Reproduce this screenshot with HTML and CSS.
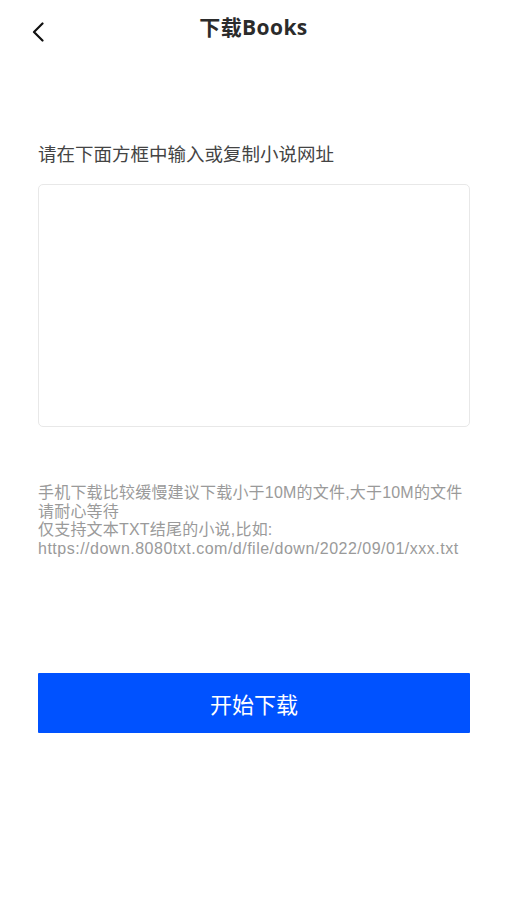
FILE: index.html
```html
<!DOCTYPE html>
<html lang="zh-CN">
<head>
<meta charset="utf-8">
<title>下载Books</title>
<link rel="stylesheet" href="styles.css">
</head>
<body>
<header class="nav">
  <div class="nav-left">
    <svg class="back" width="12" height="20" viewBox="0 0 12 20" aria-hidden="true">
      <path d="M10.5 1.5 L2 10 L10.5 18.5" fill="none" stroke="#111" stroke-width="2.2" stroke-linecap="round" stroke-linejoin="round"/>
    </svg>
  </div>
  <h1 class="title">下载Books</h1>
  <div class="nav-right"></div>
</header>
<main class="content">
  <p class="label">请在下面方框中输入或复制小说网址</p>
  <textarea class="url-box"></textarea>
  <div class="hint">
    <p class="hint-line">手机下载比较缓慢建议下载小于10M的文件,大于10M的文件</p>
    <p class="hint-line">请耐心等待</p>
    <p class="hint-line">仅支持文本TXT结尾的小说,比如:</p>
    <p class="hint-line hint-url">https://down.8080txt.com/d/file/down/2022/09/01/xxx.txt</p>
  </div>
  <button class="start" type="button">开始下载</button>
</main>
</body>
</html>
```
FILE: styles.css
```css
* { box-sizing: border-box; }
html, body {
  margin: 0;
  padding: 0;
  background: #fff;
}
body {
  font-family: "Open Sans", "Noto Sans CJK SC", sans-serif;
  color: #333;
}
.nav {
  display: grid;
  grid-template-columns: 1fr auto 1fr;
  align-items: center;
  height: 56px;
}
.nav-left {
  padding-left: 32px;
  padding-top: 8px;
  display: flex;
  align-items: center;
}
.back { display: block; }
.title {
  margin: 0;
  font-size: 21px;
  font-weight: 700;
  color: #2b2b2b;
  letter-spacing: 0.4px;
  line-height: 28px;
  padding-bottom: 2px;
}
.content {
  margin-left: 38px;
  width: 432px;
  display: flex;
  flex-direction: column;
}
.label {
  margin: 86px 0 0;
  font-size: 18.5px;
  line-height: 24px;
  color: #444;
}
.url-box {
  margin-top: 18px;
  height: 243px;
  width: 100%;
  border: 1px solid #e8e8e8;
  border-radius: 5px;
  resize: none;
  background: #fff;
  outline: none;
}
.hint {
  margin-top: 57px;
  display: flex;
  flex-direction: column;
}
.hint-line {
  margin: 0;
  height: 18.5px;
  font-family: "Liberation Sans", "Noto Sans CJK SC", sans-serif;
  font-size: 16px;
  line-height: 18.5px;
  letter-spacing: 0.2px;
  color: #9a9a9a;
  white-space: nowrap;
}
.hint-url {
  letter-spacing: 0.5px;
}
.start {
  margin-top: 115px;
  height: 60px;
  width: 100%;
  border: none;
  border-radius: 1px;
  background: #0052ff;
  color: #fff;
  font-family: "Open Sans", "Noto Sans CJK SC", sans-serif;
  font-size: 22px;
}
```
